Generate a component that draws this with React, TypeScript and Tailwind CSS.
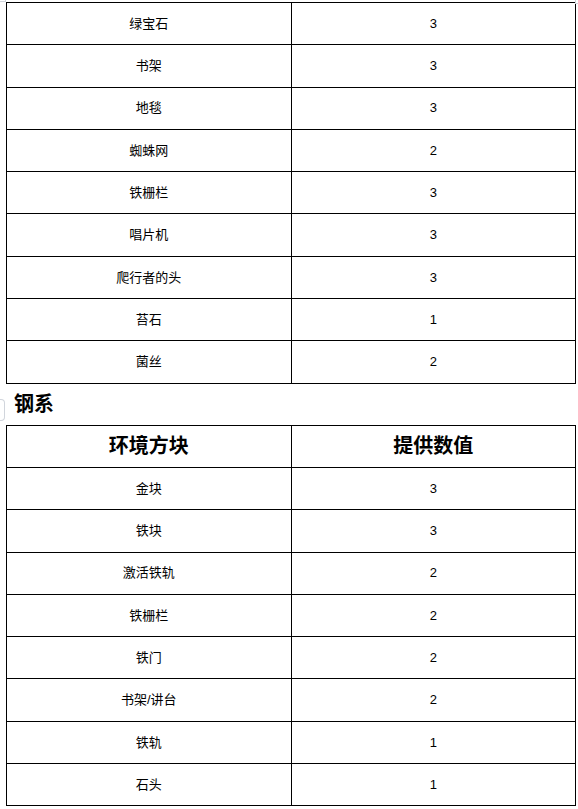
const topRows: [string, string][] = [
  ['绿宝石', '3'],
  ['书架', '3'],
  ['地毯', '3'],
  ['蜘蛛网', '2'],
  ['铁栅栏', '3'],
  ['唱片机', '3'],
  ['爬行者的头', '3'],
  ['苔石', '1'],
  ['菌丝', '2'],
];

const steelRows: [string, string][] = [
  ['金块', '3'],
  ['铁块', '3'],
  ['激活铁轨', '2'],
  ['铁栅栏', '2'],
  ['铁门', '2'],
  ['书架/讲台', '2'],
  ['铁轨', '1'],
  ['石头', '1'],
];

const Row = ({ cells, head }: { cells: [string, string]; head?: boolean }) => (
  <div className={`grid grid-cols-2 h-[42.3px] ${head ? 'text-[20px] font-bold' : 'text-[13px]'}`}>
    {cells.map((c, i) => (
      <div key={i} className="flex items-center justify-center border-r border-b border-black">
        {c}
      </div>
    ))}
  </div>
);

export default function App() {
  return (
    <div
      className="relative min-h-[809px] bg-white text-black pt-[2px] pl-[6px]"
      style={{ fontFamily: '"Liberation Sans", "Noto Sans CJK SC", sans-serif' }}
    >
      {/* page corner marks */}
      <div className="absolute left-0 top-0 w-[6px] h-[2px] border-b border-r border-gray-300" />
      <div className="absolute right-0 top-0 w-[3px] h-[4px] border-b border-l border-gray-300" />

      <div className="w-[570px] border-t border-l border-black">
        {topRows.map((r, i) => (
          <Row key={i} cells={r} />
        ))}
      </div>

      <div className="relative h-[41px] flex items-center pl-[8px] text-[20px] font-bold">
        <span className="absolute left-[-6px] top-[15px] w-[5px] h-[22px] border border-l-0 border-gray-300 rounded-r-sm" />
        钢系
      </div>

      <div className="w-[570px] border-t border-l border-black">
        <Row cells={['环境方块', '提供数值']} head />
        {steelRows.map((r, i) => (
          <Row key={i} cells={r} />
        ))}
      </div>
    </div>
  );
}
